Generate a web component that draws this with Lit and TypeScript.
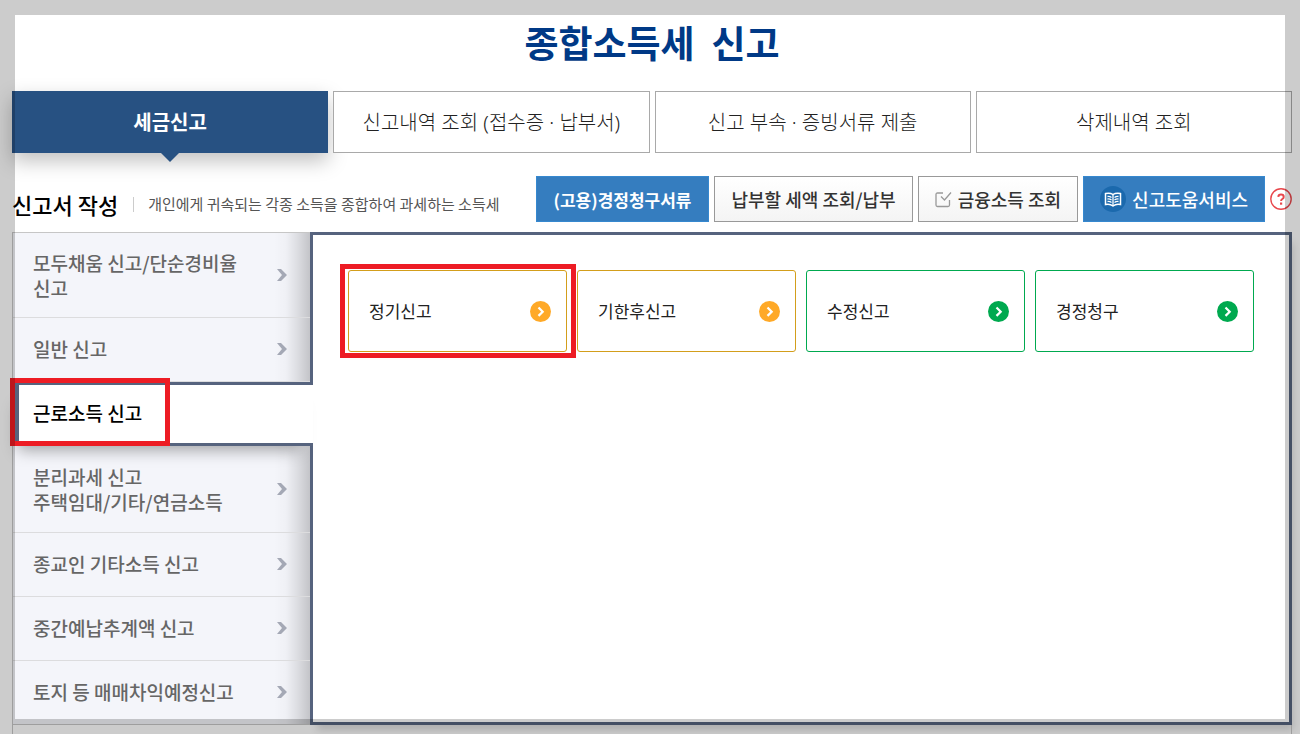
import { LitElement, html, css, svg } from "lit";
import { customElement, state } from "lit/decorators.js";
import { classMap } from "lit/directives/class-map.js";

interface MenuItem {
  lines: string[];
  tall?: boolean;
}

const TABS = ["세금신고", "신고내역 조회 (접수증 · 납부서)", "신고 부속 · 증빙서류 제출", "삭제내역 조회"];

const MENU: MenuItem[] = [
  { lines: ["모두채움 신고/단순경비율", "신고"] },
  { lines: ["일반 신고"] },
  { lines: ["근로소득 신고"] },
  { lines: ["분리과세 신고", "주택임대/기타/연금소득"], tall: true },
  { lines: ["종교인 기타소득 신고"] },
  { lines: ["중간예납추계액 신고"] },
  { lines: ["토지 등 매매차익예정신고"] },
];

const CARDS = [
  { label: "정기신고", tone: "amber", marked: true },
  { label: "기한후신고", tone: "amber", marked: false },
  { label: "수정신고", tone: "green", marked: false },
  { label: "경정청구", tone: "green", marked: false },
];

const chevron = svg`<path d="M0 0H4L10 6L4 12H0L5 6Z" fill="currentColor"/>`;

@customElement("app-root")
export class AppRoot extends LitElement {
  @state() private tab = 0;
  @state() private menu = 2;

  static styles = css`
    :host {
      display: flex;
      flex-direction: column;
      box-sizing: border-box;
      min-height: 100vh;
      padding: 15px 8px 0 12px;
      background: #fff;
      color: #333;
      font-family: "Noto Sans CJK KR", sans-serif;
      overflow: hidden;
    }
    * { box-sizing: border-box; }
    button, a { font-family: inherit; color: inherit; text-decoration: none; }
    button { margin: 0; padding: 0; border: 0; background: none; cursor: pointer; }
    svg { display: block; flex: none; }
    .title {
      margin: 0;
      height: 76px;
      line-height: 54px;
      font-size: 37px;
      font-weight: 700;
      text-align: center;
      color: #003986;
    }
    .tabs { display: grid; grid-template-columns: repeat(4, 1fr); gap: 5px; }
    .tab {
      position: relative;
      height: 62px;
      padding-bottom: 2px;
      border: 1px solid #a9a9a9;
      background: #fff;
      font-family: "Noto Sans", "Noto Sans CJK KR", sans-serif;
      font-size: 20px;
      font-weight: 300;
      color: #222;
    }
    .tab.on {
      border-color: #275182;
      background: #275182;
      color: #fff;
      font-weight: 700;
      box-shadow: 0 8px 20px rgba(0, 0, 0, 0.25);
    }
    .tab.on::after {
      content: "";
      position: absolute;
      left: 50%;
      top: 100%;
      margin-left: -10px;
      border: 10px solid transparent;
      border-top-color: #275182;
      border-bottom: 0;
    }
    .bar { display: flex; align-items: center; margin: 23px 0 10px; }
    .heading { margin: 0; font-size: 22px; line-height: 32px; font-weight: 500; color: #000; padding-top: 10px; }
    .about {
      margin: 10px 0 0 15px;
      padding-left: 14px;
      border-left: 1px solid #ccc;
      font-size: 15px;
      line-height: 14px;
      padding-bottom: 1px;
      font-weight: 400;
      color: #555;
    }
    .tools { display: flex; align-items: center; gap: 5px; margin-left: auto; }
    .tool {
      display: flex;
      align-items: center;
      justify-content: center;
      gap: 6px;
      height: 46px;
      padding: 0 16px;
      border: 1px solid #999;
      background: linear-gradient(#fff, #f4f4f4);
      font-size: 18px;
      font-weight: 500;
      white-space: nowrap;
    }
    .tool.blue { border-color: #3688cf; background: #357dbf; color: #fff; }
    .tool.compact { padding: 0 17px; font-size: 17px; font-weight: 700; }
    .body { display: grid; grid-template-columns: 298px 1fr; }
    .side {
      position: relative;
      z-index: 1;
      border: 1px solid #c6c6c6;
      border-right: 0;
      background:
        linear-gradient(to left, rgba(0, 0, 0, 0.2), rgba(0, 0, 0, 0.1) 12px, rgba(0, 0, 0, 0.02) 24px, transparent 36px),
        #f4f5fa;
    }
    .item {
      display: flex;
      align-items: center;
      justify-content: space-between;
      width: 100%;
      padding: 17px 23px 17px 20px;
      border-bottom: 1px solid #dcdcde;
      font-size: 19px;
      line-height: 25px;
      font-weight: 500;
      text-align: left;
      color: #666;
    }
    .item.single { padding-top: 18px; padding-bottom: 20px; }
    .item.tall { padding-top: 18px; padding-bottom: 18px; }
    .item:last-child { border-bottom: 0; }
    .item .mark { color: #a4a8b5; }
    .item.on {
      position: relative;
      width: calc(100% + 4px);
      margin-left: -1px;
      height: 64px;
      padding: 0 0 3px 14px;
      border: 3px solid #56637e;
      border-left-width: 7px;
      border-right: 0;
      background: #fff;
      color: #000;
      box-shadow: -4px 14px 16px -10px rgba(0, 0, 0, 0.35);
    }
    .frame { position: absolute; border: 5px solid #ed1c24; pointer-events: none; }
    .item .frame { left: -9px; top: -7px; width: 160px; height: 68px; }
    .panel {
      padding: 35px;
      border: 3px solid #56637e;
      background: #fff;
      box-shadow: 4px 8px 8px -3px rgba(0, 0, 0, 0.15);
    }
    .cards { display: grid; grid-template-columns: repeat(4, 1fr); gap: 10px; }
    .card {
      position: relative;
      display: flex;
      align-items: center;
      justify-content: space-between;
      height: 82px;
      padding: 0 15px 0 20px;
      border: 1px solid currentColor;
      border-radius: 3px;
    }
    .card .label { padding-bottom: 2px; font-size: 17px; font-weight: 400; color: #222; }
    .card.amber { color: #d39e1b; }
    .card.green { color: #00a94f; }
    .card.amber .dot { fill: #ffa927; }
    .card.green .dot { fill: #00a94f; }
    .card .frame { inset: -7px -10px -7px -9px; }
    .rest { flex: 1; border: 1px solid #c6c6c6; border-width: 0 1px; }
    .shade {
      position: fixed;
      inset: 0;
      z-index: 5;
      border: 15px solid rgba(0, 0, 0, 0.2);
      pointer-events: none;
    }
  `;

  render() {
    return html`
      <h1 class="title">종합소득세&nbsp; 신고</h1>
      <nav class="tabs">
        ${TABS.map((t, i) => html`<button class=${classMap({ tab: true, on: i === this.tab })} @click=${() => (this.tab = i)}>${t}</button>`)}
      </nav>
      <div class="bar">
        <h2 class="heading">신고서 작성</h2>
        <p class="about">개인에게 귀속되는 각종 소득을 종합하여 과세하는 소득세</p>
        <div class="tools">
          <button class="tool blue compact">(고용)경정청구서류</button>
          <button class="tool">납부할 세액 조회/납부</button>
          <button class="tool">
            <svg width="17" height="17" viewBox="0 0 17 17" fill="none" stroke="#999" stroke-width="1.3">
              <path d="M8 2H2.5Q1 2 1 3.500V14Q1 15.500 2.500 15.500H13Q14.500 15.500 14.500 14V9" />
              <path d="M6 5.500L9.500 9L16 1.500" />
            </svg>
            금융소득 조회
          </button>
          <button class="tool blue">
            <svg width="26" height="26" viewBox="0 0 26 26">
              <circle cx="13" cy="13" r="13" fill="#1b69ad" />
              <path d="M5.500 7.500Q10 6.500 13 8.500Q16 6.500 20.500 7.500V18.500Q16 17.500 13 20Q10 17.500 5.500 18.500Z" fill="#1b69ad" stroke="#fff" stroke-width="1.500" />
              <path d="M13 8.500V20M7.500 10.500Q10 10.300 11.500 11.500M7.500 13Q10 12.800 11.500 14M7.500 15.500Q10 15.300 11.500 16.500M18.500 10.500Q16 10.300 14.500 11.500M18.500 13Q16 12.800 14.500 14M18.500 15.500Q16 15.300 14.500 16.500" fill="none" stroke="#fff" stroke-width="1.300" />
            </svg>
            신고도움서비스
          </button>
          <button aria-label="도움말">
            <svg width="22" height="22" viewBox="0 0 22 22" fill="none" stroke="#e8474c">
              <circle cx="11" cy="11" r="10.200" stroke-width="1.400" />
              <path d="M8.300 8.800Q8.500 6.600 11 6.600Q13.700 6.600 13.700 8.900Q13.700 10.200 12.300 11Q11.100 11.700 11.100 13" stroke-width="2" />
              <path d="M11.100 14.500V16.700" stroke-width="2.200" />
            </svg>
          </button>
        </div>
      </div>
      <div class="body">
        <nav class="side">
          ${MENU.map((m, i) => {
            const on = i === this.menu;
            return html`<button
              class=${classMap({ item: true, on, tall: !!m.tall, single: m.lines.length === 1 })}
              @click=${() => (this.menu = i)}
            >
              <span>${m.lines.map((l, n) => (n ? html`<br />${l}` : l))}</span>
              ${on ? html`<span class="frame"></span>` : html`<svg class="mark" width="10" height="12" viewBox="0 0 10 12">${chevron}</svg>`}
            </button>`;
          })}
        </nav>
        <main class="panel">
          <div class="cards">
            ${CARDS.map(
              (c) => html`<a class="card ${c.tone}" href="#">
                <span class="label">${c.label}</span>
                <svg width="21" height="21" viewBox="0 0 21 21">
                  <circle class="dot" cx="10.500" cy="10.500" r="10.500" />
                  <path d="M8.500 6.500L12.700 10.700L8.500 14.900" fill="none" stroke="#fff" stroke-width="2.200" />
                </svg>
                ${c.marked ? html`<span class="frame"></span>` : null}
              </a>`
            )}
          </div>
        </main>
      </div>
      <div class="rest"></div>
      <div class="shade"></div>
    `;
  }
}
